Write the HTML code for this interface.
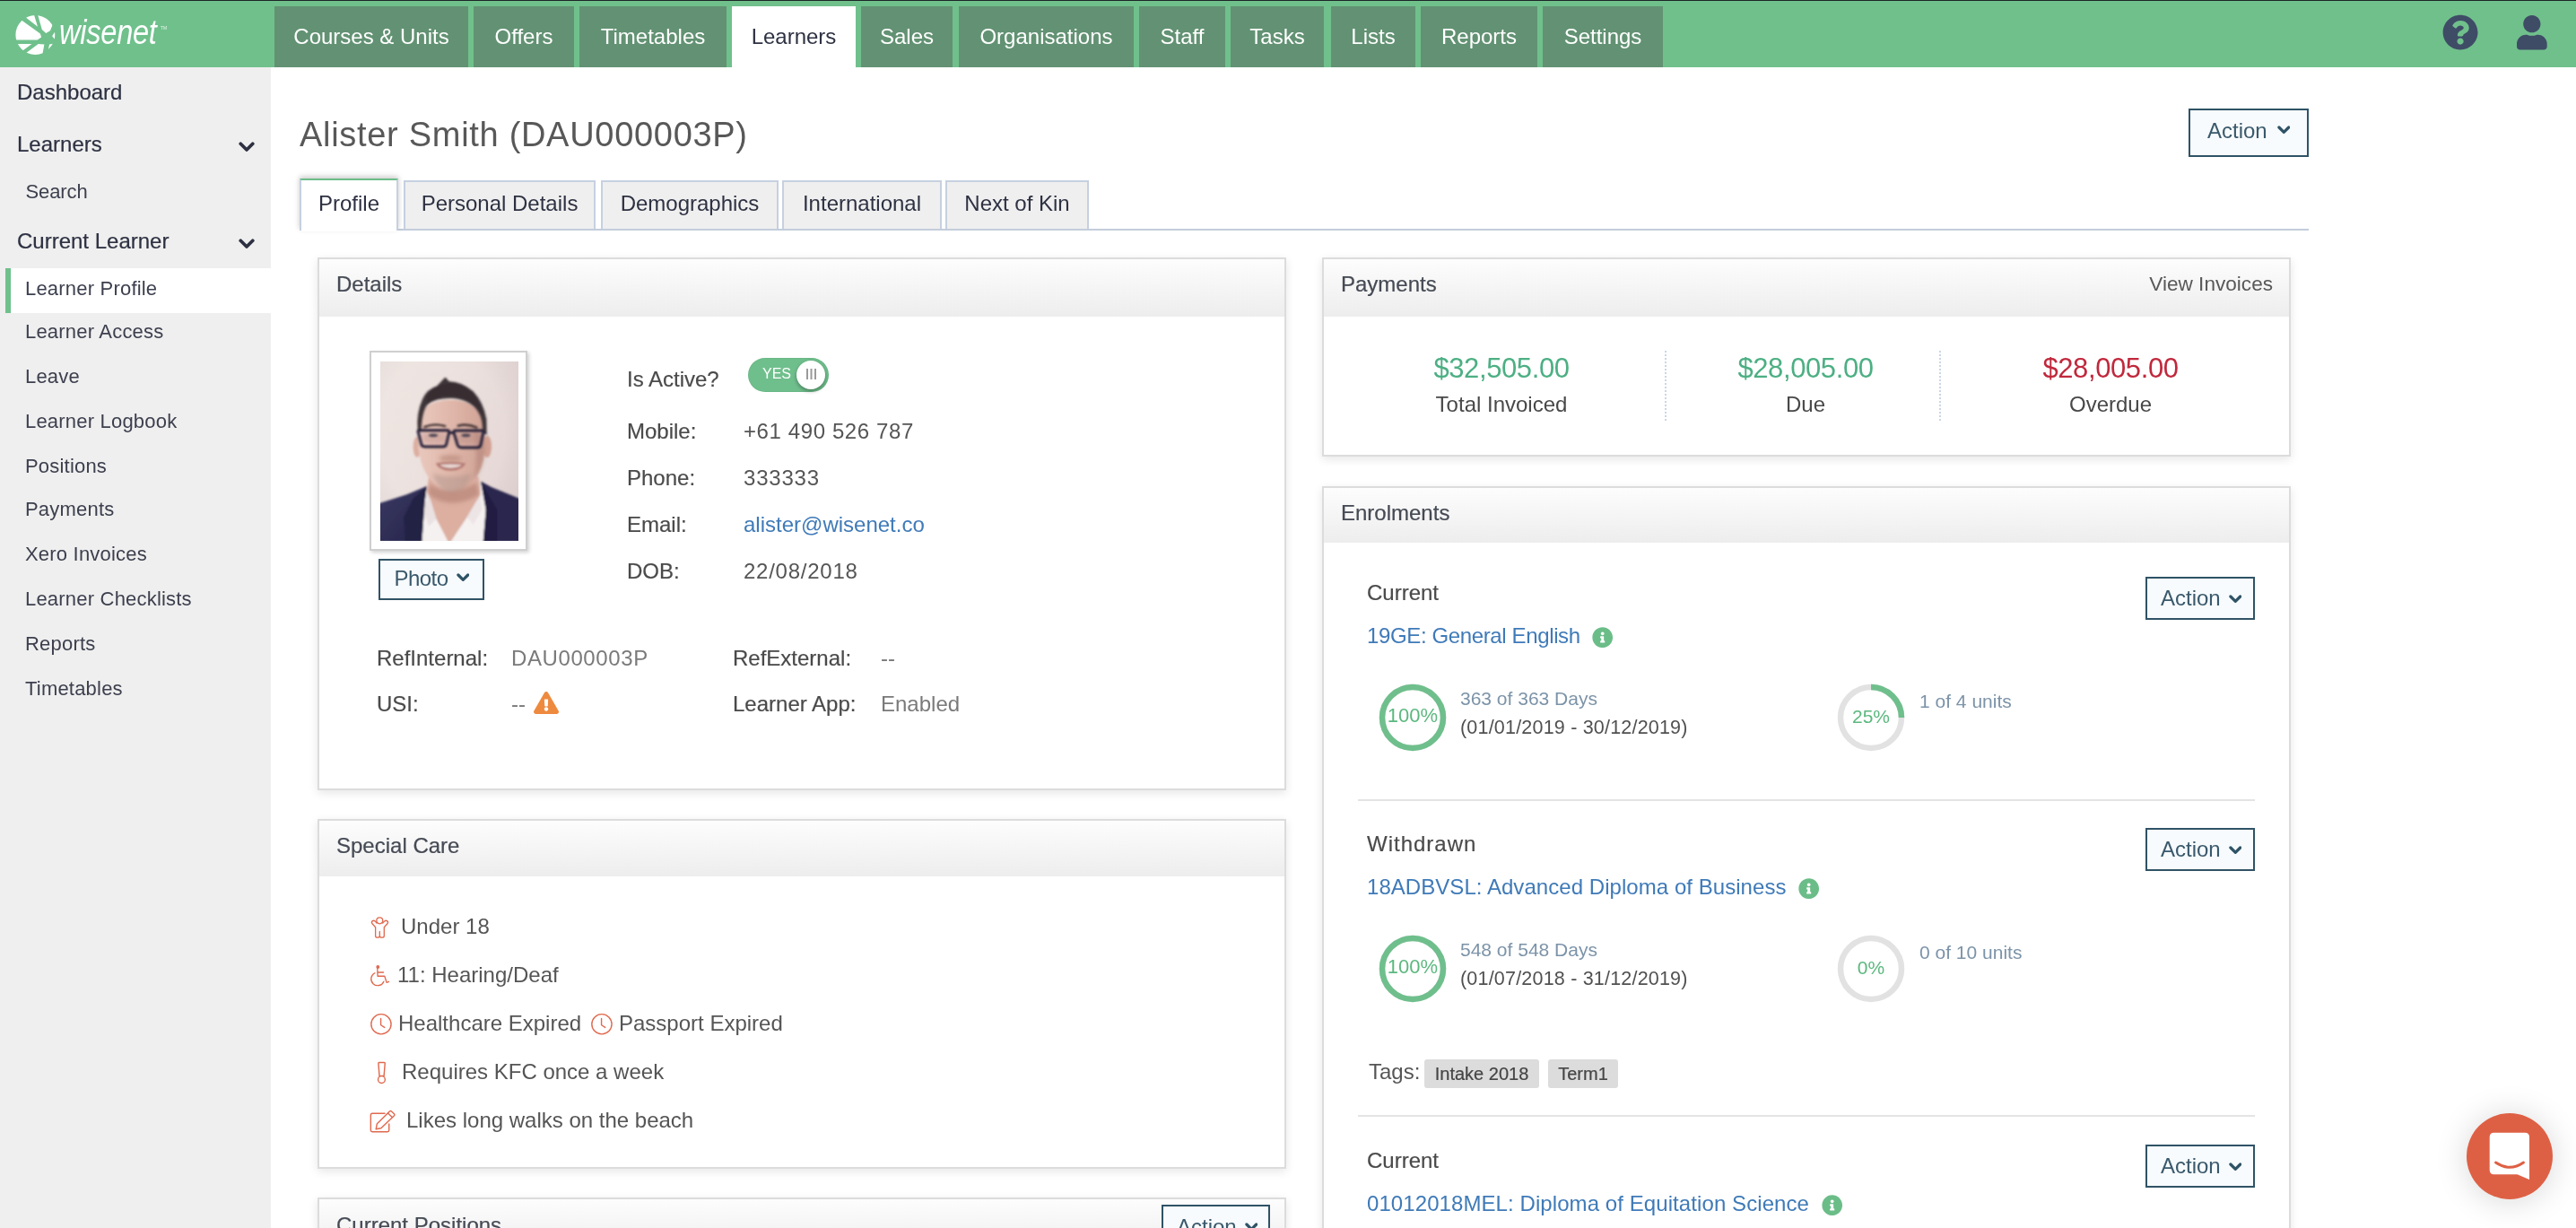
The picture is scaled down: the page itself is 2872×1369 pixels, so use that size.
<!DOCTYPE html>
<html>
<head>
<meta charset="utf-8">
<title>Alister Smith (DAU000003P)</title>
<style>
html,body{margin:0;padding:0;}
html{width:2872px;height:1369px;overflow:hidden;}
body{width:2872px;height:1369px;overflow:hidden;background:#fff;position:relative;font-family:"Liberation Sans",sans-serif;color:#4a4a4a;}
*{box-sizing:border-box;}
.abs{position:absolute;}
.t{position:absolute;white-space:nowrap;line-height:1;}
/* header */
#hdr{position:absolute;left:0;top:0;width:2872px;height:75px;background:#70c08c;}
#hdrline{position:absolute;left:0;top:0;width:2872px;height:1px;background:#1d2427;}
.nt{position:absolute;top:7px;height:68px;background:#629273;color:#fff;font-size:24px;line-height:68px;text-align:center;white-space:nowrap;}
.nt.on{background:#fff;color:#2d3142;}
/* sidebar */
#side{position:absolute;left:0;top:75px;width:302px;height:1294px;background:#efefef;}
.s1{color:#2d3142;font-size:24px;-webkit-text-stroke:0.2px #2d3142;}
.s2{color:#3c3f4d;font-size:22px;letter-spacing:0.2px;}
/* page tabs */
.pt{position:absolute;top:201px;height:54px;background:#efefef;border:2px solid #c6d0e0;border-bottom:none;color:#2d3142;font-size:24px;line-height:48px;text-align:center;white-space:nowrap;}
/* panels */
.panel{position:absolute;background:#fff;border:2px solid #dcdcdc;box-shadow:0 3px 10px rgba(0,0,0,0.10);}
.ph{position:absolute;left:0;top:0;right:0;height:63px;background:linear-gradient(#fdfdfd,#ededed);}
.pht{position:absolute;left:19px;top:16px;font-size:24px;line-height:1;color:#454a54;-webkit-text-stroke:0.2px #454a54;white-space:nowrap;}
.lb{font-size:24px;color:#4a4a4a;-webkit-text-stroke:0.18px #4a4a4a;}
.vl{font-size:24px;color:#555;}
.gv{font-size:24px;color:#7a7a7a;}
.amt{font-size:31px;text-align:center;letter-spacing:-0.4px;}
.albl{font-size:24px;text-align:center;color:#484848;}
.tag{top:0;height:32px;background:#dcdcdc;border-radius:3px;font-size:20px;line-height:32px;-webkit-text-stroke:0.2px #454545;text-align:center;color:#454545;white-space:nowrap;}
.btn{position:absolute;border:2px solid #2f5366;background:#f7fbfd;color:#2f5366;font-size:24px;white-space:nowrap;}
</style>
</head>
<body>
<div id="wrap" style="position:absolute;left:0;top:0;width:2872px;height:1369px;overflow:hidden;will-change:transform;">
<!-- HEADER -->
<div id="hdr"></div>
<div id="hdrline"></div>
<!-- LOGO -->
<svg class="abs" style="left:0px;top:0px;" width="80" height="80" viewBox="0 0 936.7 936.7">
<defs><clipPath id="gcl"><circle cx="461" cy="456" r="257"/></clipPath></defs>
<g clip-path="url(#gcl)" fill="#fff">
<path d="M492 348 L300 200 L300 100 L430 100 L445 195 Z"/>
<path d="M548 385 L478 140 L800 140 L690 315 L655 400 L600 432 Z"/>
<path d="M525 440 L150 169 L150 522 L488 522 L540 485 Z"/>
<path d="M415 575 L150 575 L150 768 Z"/>
<path d="M500 575 L578 580 L540 790 L250 790 L250 758 Z"/>
<path d="M722 408 L681 470 L722 522 Z"/>
<path d="M645 580 L694 570 L632 644 Z"/>
</g>
</svg>
<span class="t" style="left:66px;top:16px;font-size:39px;font-style:italic;color:#fff;transform:scaleX(0.835);transform-origin:0 0;letter-spacing:-0.3px;">wisenet</span>
<span class="t" style="left:179px;top:29px;font-size:5px;color:#e8f5ec;">TM</span>

<!-- nav tabs -->
<div class="nt" style="left:306px;width:216px;">Courses &amp; Units</div>
<div class="nt" style="left:528px;width:112px;">Offers</div>
<div class="nt" style="left:646px;width:164px;">Timetables</div>
<div class="nt on" style="left:816px;width:138px;">Learners</div>
<div class="nt" style="left:960px;width:102px;">Sales</div>
<div class="nt" style="left:1069px;width:195px;">Organisations</div>
<div class="nt" style="left:1270px;width:96px;">Staff</div>
<div class="nt" style="left:1372px;width:104px;">Tasks</div>
<div class="nt" style="left:1484px;width:94px;">Lists</div>
<div class="nt" style="left:1584px;width:130px;">Reports</div>
<div class="nt" style="left:1720px;width:134px;">Settings</div>
<!-- HEADER ICONS -->
<svg class="abs" style="left:2723.3px;top:15.7px;" width="40.15" height="40.15" viewBox="0 0 512 512"><path fill="#3f4c66" d="M504 256c0 136.997-111.043 248-248 248S8 392.997 8 256C8 119.083 119.043 8 256 8s248 111.083 248 248zM262.655 90c-54.497 0-89.255 22.957-116.549 63.758-3.536 5.286-2.353 12.415 2.715 16.258l34.699 26.31c5.205 3.947 12.621 3.008 16.665-2.122 17.864-22.658 30.113-35.797 57.303-35.797 20.429 0 45.698 13.148 45.698 32.958 0 14.976-12.363 22.667-32.534 33.976C247.128 238.528 216 254.941 216 296v4c0 6.627 5.373 12 12 12h56c6.627 0 12-5.373 12-12v-1.333c0-28.462 83.186-29.647 83.186-106.667 0-58.002-60.165-102-116.531-102zM256 338c-25.365 0-46 20.635-46 46 0 25.364 20.635 46 46 46s46-20.636 46-46c0-25.365-20.635-46-46-46z"/></svg>
<svg class="abs" style="left:2806.2px;top:17.2px;" width="33.7" height="38.5" viewBox="0 0 448 512"><path fill="#3f4c66" d="M224 256c70.7 0 128-57.3 128-128S294.7 0 224 0 96 57.3 96 128s57.3 128 128 128zm89.6 32h-16.7c-22.2 10.2-46.9 16-72.9 16s-50.600-5.800-72.900-16h-16.700C60.200 288 0 348.200 0 422.400V464c0 26.500 21.500 48 48 48h352c26.500 0 48-21.500 48-48v-41.600c0-74.200-60.200-134.400-134.400-134.400z"/></svg>


<!-- SIDEBAR -->
<div id="side"></div>
<div class="abs" style="left:6px;top:299px;width:6px;height:50px;background:#70c08c;"></div>
<div class="abs" style="left:12px;top:299px;width:290px;height:50px;background:#fff;"></div>
<span class="t s1" style="left:19px;top:91px;">Dashboard</span>
<span class="t s1" style="left:19px;top:149px;">Learners</span>
<span class="t s2" style="left:28.5px;top:203px;letter-spacing:-0.1px;">Search</span>
<span class="t s1" style="left:19px;top:257px;">Current Learner</span>
<span class="t s2" style="left:28px;top:311px;">Learner Profile</span>
<span class="t s2" style="left:28px;top:359px;">Learner Access</span>
<span class="t s2" style="left:28px;top:409px;">Leave</span>
<span class="t s2" style="left:28px;top:459px;">Learner Logbook</span>
<span class="t s2" style="left:28px;top:509px;">Positions</span>
<span class="t s2" style="left:28px;top:557px;">Payments</span>
<span class="t s2" style="left:28px;top:607px;">Xero Invoices</span>
<span class="t s2" style="left:28px;top:657px;">Learner Checklists</span>
<span class="t s2" style="left:28px;top:707px;">Reports</span>
<span class="t s2" style="left:28px;top:757px;">Timetables</span>
<svg class="abs" style="left:266px;top:158.2px;" width="18" height="12.6" viewBox="0 0 20 14"><path d="M2.5 2.5 L10 10 L17.5 2.5" fill="none" stroke="#2d3142" stroke-width="4.2" stroke-linecap="round" stroke-linejoin="round"/></svg>
<svg class="abs" style="left:266px;top:266.2px;" width="18" height="12.6" viewBox="0 0 20 14"><path d="M2.5 2.5 L10 10 L17.5 2.5" fill="none" stroke="#2d3142" stroke-width="4.2" stroke-linecap="round" stroke-linejoin="round"/></svg>

<!-- TITLE -->
<span class="t" style="left:334px;top:131px;font-size:38px;color:#585858;letter-spacing:0.7px;">Alister Smith (DAU000003P)</span>
<div class="btn" style="left:2440px;top:121px;width:134px;height:54px;"></div>
<span class="t" style="left:2461px;top:134px;font-size:24px;color:#3a596c;">Action</span>
<svg class="abs" style="left:2538.7px;top:139.8px;" width="14.6" height="9.6" viewBox="0 0 14.6 9.6"><path d="M1.9 2 L7.3 7.4 L12.7 2" fill="none" stroke="#2f5366" stroke-width="3.2" stroke-linecap="round" stroke-linejoin="round"/></svg>

<!-- PAGE TABS -->
<div class="abs" style="left:334px;top:255px;width:2240px;height:2px;background:#c3cddb;"></div>
<div class="pt" style="left:450px;width:214px;">Personal Details</div>
<div class="pt" style="left:670px;width:198px;">Demographics</div>
<div class="pt" style="left:872px;width:178px;">International</div>
<div class="pt" style="left:1054px;width:160px;">Next of Kin</div>
<div class="abs" style="left:334px;top:199px;width:110px;height:58px;background:#fff;border:2px solid #c6d0e0;border-top:2px solid #6bbd88;border-bottom:none;box-shadow:0 -2px 6px rgba(0,0,0,0.22);"></div>
<div class="abs" style="left:336px;top:250px;width:106px;height:8px;background:#fff;"></div>
<span class="t" style="left:355px;top:215px;font-size:24px;color:#2d3142;">Profile</span>

<!-- PANELS -->
<div class="panel" id="pDetails" style="left:354px;top:287px;width:1080px;height:594px;"><div class="ph" style="height:64px"></div><span class="pht">Details</span></div>
<div class="panel" id="pCare" style="left:354px;top:913px;width:1080px;height:390px;"><div class="ph" style="height:62px"></div><span class="pht">Special Care</span></div>
<div class="panel" id="pPos" style="left:354px;top:1335px;width:1080px;height:120px;"><div class="ph" style="height:62px"></div><span class="pht" style="top:17px">Current Positions</span></div>
<div class="panel" id="pPay" style="left:1474px;top:287px;width:1080px;height:222px;"><div class="ph" style="height:64px"></div><span class="pht">Payments</span></div>
<div class="panel" id="pEnr" style="left:1474px;top:541.5px;width:1080px;height:900px;"><div class="ph" style="height:61.5px"></div><span class="pht">Enrolments</span></div>

<!-- DETAILS CONTENT -->
<div class="abs" style="left:412px;top:391px;width:176px;height:223px;background:#fff;border:2px solid #cfcfcf;box-shadow:2px 2px 4px rgba(0,0,0,0.18);"></div>
<svg class="abs" style="left:424px;top:403px;" width="154" height="200" viewBox="24 18 916 1189" preserveAspectRatio="none">
<defs>
<linearGradient id="pbg" x1="0" y1="0" x2="1" y2="0.5"><stop offset="0" stop-color="#efe7e3"/><stop offset="0.55" stop-color="#ebe0dd"/><stop offset="1" stop-color="#e5d7d6"/></linearGradient>
<radialGradient id="pvg" cx="0.45" cy="0.4" r="0.75"><stop offset="0.6" stop-color="#000" stop-opacity="0"/><stop offset="1" stop-color="#5a4050" stop-opacity="0.07"/></radialGradient>
<linearGradient id="pface" x1="0" y1="0" x2="1" y2="0"><stop offset="0" stop-color="#e9c8bd"/><stop offset="0.5" stop-color="#e0b7aa"/><stop offset="1" stop-color="#cfa295"/></linearGradient>
<linearGradient id="pjk" x1="0" y1="0" x2="1" y2="1"><stop offset="0" stop-color="#3a3963"/><stop offset="1" stop-color="#25244a"/></linearGradient>
<filter id="pbl" x="-5%" y="-5%" width="110%" height="110%"><feGaussianBlur stdDeviation="7"/></filter>
<filter id="pbl3" x="-20%" y="-20%" width="140%" height="140%"><feGaussianBlur stdDeviation="14"/></filter>
<clipPath id="pcl"><rect x="24" y="18" width="916" height="1189"/></clipPath>
</defs>
<rect x="24" y="18" width="916" height="1189" fill="url(#pbg)"/>
<rect x="24" y="18" width="916" height="1189" fill="url(#pvg)"/>
<g clip-path="url(#pcl)">
<g filter="url(#pbl)">
<!-- neck -->
<path d="M345 780 L675 780 L690 900 L600 1050 L490 1215 L470 1215 L390 1060 L335 900 Z" fill="#dcafa1"/>
<!-- shirt -->
<path d="M318 862 L345 900 L395 1060 L475 1215 L295 1215 L300 1000 Z" fill="#f6f1f1"/>
<path d="M688 815 L722 900 L725 1010 L708 1215 L490 1215 L600 1050 L685 905 Z" fill="#f6f1f1"/>
<path d="M345 900 L395 1060 L345 1110 L312 1000 Z" fill="#e9e1e2"/>
<path d="M600 1050 L685 905 L700 1000 L640 1100 Z" fill="#ece4e5"/>
<!-- jacket -->
<path d="M10 960 L200 900 L332 845 L318 960 L300 1215 L10 1215 Z" fill="url(#pjk)"/>
<path d="M690 812 L760 850 L950 928 L950 1215 L706 1215 L724 1000 Z" fill="#29284e"/>
<path d="M332 845 L318 960 L300 1215 L190 1215 L180 1050 L240 930 Z" fill="#222145"/>
<path d="M690 812 L724 1000 L706 1215 L800 1215 L800 1000 Z" fill="#211f42"/>
<!-- ears -->
<ellipse cx="268" cy="585" rx="26" ry="68" fill="#dcaea0"/>
<ellipse cx="732" cy="582" rx="30" ry="72" fill="#d3a193"/>
<!-- face -->
<path d="M275 420 Q290 280 490 270 Q700 280 716 430 L718 590 Q710 720 650 800 Q580 885 500 888 Q420 885 355 800 Q290 720 276 590 Z" fill="url(#pface)"/>
</g>
<!-- soft shadows -->
<g filter="url(#pbl3)">
<path d="M350 830 Q500 930 660 820 L680 900 Q500 1010 340 900 Z" fill="#b98779" opacity="0.75"/>
<path d="M370 760 Q500 800 630 760 Q600 880 500 888 Q410 880 370 760 Z" fill="#a88c84" opacity="0.42"/>
<path d="M640 470 Q720 480 715 620 Q700 740 640 800 Q680 650 640 470 Z" fill="#b4857a" opacity="0.6"/>
<ellipse cx="490" cy="660" rx="75" ry="22" fill="#b98a7c" opacity="0.7"/>
<ellipse cx="380" cy="524" rx="80" ry="36" fill="#c9a096" opacity="0.5"/>
<ellipse cx="605" cy="526" rx="80" ry="36" fill="#c09488" opacity="0.5"/>
</g>
<g filter="url(#pbl)">
<!-- hair -->
<path d="M272 470 Q262 360 305 265 Q335 200 400 180 L455 122 L480 150 Q560 150 640 215 Q710 290 728 400 L730 505 L702 480 Q705 400 672 350 Q620 270 500 262 Q400 258 340 300 Q300 345 296 470 Z" fill="#3e3439"/>
<path d="M330 245 Q400 172 480 160 Q580 165 650 240 Q690 300 702 380 Q640 262 500 246 Q400 242 335 305 Z" fill="#372d33"/>
<!-- brows -->
<path d="M318 452 Q380 425 452 446" stroke="#4b3b3a" stroke-width="16" fill="none" stroke-linecap="round"/>
<path d="M540 444 Q600 428 662 455" stroke="#4b3b3a" stroke-width="16" fill="none" stroke-linecap="round"/>
<!-- eyes -->
<ellipse cx="375" cy="507" rx="30" ry="11" fill="#4f4654"/>
<ellipse cx="592" cy="507" rx="30" ry="11" fill="#4f4654"/>
<!-- glasses -->
<path d="M280 474 L470 474 Q482 474 480 488 L462 566 Q458 582 440 582 L318 582 Q300 582 296 566 L276 488 Q272 474 280 474 Z" fill="rgba(120,110,140,0.04)" stroke="#27233a" stroke-width="18"/>
<path d="M522 476 L698 476 Q708 476 706 490 L690 570 Q686 588 668 588 L560 588 Q542 588 536 570 L512 490 Q508 476 522 476 Z" fill="rgba(120,110,140,0.04)" stroke="#27233a" stroke-width="18"/>
<path d="M478 494 Q496 484 512 494" stroke="#27233a" stroke-width="16" fill="none"/>
<path d="M704 488 L726 494" stroke="#2b2740" stroke-width="12"/>
<!-- mouth -->
<path d="M392 692 Q490 676 590 692 Q572 738 490 742 Q412 738 392 692 Z" fill="#b67a73"/>
<path d="M420 702 Q490 695 562 702 Q548 722 490 724 Q436 722 420 702 Z" fill="#e8d9d5"/>
</g>
</g>
</svg>
<div class="btn" style="left:422px;top:623px;width:118px;height:46px;"></div>
<span class="t" style="left:439.5px;top:633px;font-size:24px;color:#3a596c;letter-spacing:-0.55px;">Photo</span>
<svg class="abs" style="left:508.7px;top:638.8px;" width="14.6" height="9.6" viewBox="0 0 14.6 9.6"><path d="M1.9 2 L7.3 7.4 L12.7 2" fill="none" stroke="#2f5366" stroke-width="3.2" stroke-linecap="round" stroke-linejoin="round"/></svg>

<span class="t lb" style="left:699px;top:411px;">Is Active?</span>
<span class="t lb" style="left:699px;top:469px;">Mobile:</span>
<span class="t lb" style="left:699px;top:521px;">Phone:</span>
<span class="t lb" style="left:699px;top:573px;">Email:</span>
<span class="t lb" style="left:699px;top:625px;">DOB:</span>
<span class="t vl" style="left:829px;top:469px;letter-spacing:0.6px;">+61 490 526 787</span>
<span class="t vl" style="left:829px;top:521px;letter-spacing:0.8px;">333333</span>
<span class="t vl" style="left:829px;top:573px;color:#3f7ab8;">alister@wisenet.co</span>
<span class="t vl" style="left:829px;top:625px;letter-spacing:0.75px;">22/08/2018</span>
<!-- toggle -->
<div class="abs" style="left:834px;top:399px;width:90px;height:38px;border-radius:19px;background:#6fbf8c;box-shadow:inset 0 0 0 1px rgba(0,0,0,0.04);"></div>
<span class="t" style="left:850px;top:409px;font-size:16px;color:#fff;">YES</span>
<div class="abs" style="left:888px;top:402px;width:32px;height:32px;border-radius:50%;background:#fff;box-shadow:0 2px 4px rgba(0,0,0,0.35);"></div>
<div class="abs" style="left:899px;top:411px;width:1.5px;height:12px;background:#9a9a9a;box-shadow:4.5px 0 0 #9a9a9a,9px 0 0 #9a9a9a;"></div>

<span class="t lb" style="left:420px;top:722px;">RefInternal:</span>
<span class="t gv" style="left:570px;top:722px;letter-spacing:0.6px;">DAU000003P</span>
<span class="t lb" style="left:817px;top:722px;">RefExternal:</span>
<span class="t gv" style="left:982px;top:722px;">--</span>
<span class="t lb" style="left:420px;top:773px;">USI:</span>
<span class="t gv" style="left:570px;top:773px;">--</span>
<svg class="abs" style="left:595px;top:771px;" width="28" height="25" viewBox="0 0 576 512"><path fill="#ee8a3e" d="M569.517 440.013C587.975 472.007 564.806 512 527.94 512H48.054c-36.937 0-59.999-40.055-41.577-71.987L246.423 23.985c18.467-32.009 64.72-31.951 83.154 0l239.94 416.028zM288 354c-25.405 0-46 20.595-46 46s20.595 46 46 46 46-20.595 46-46-20.595-46-46-46zm-43.673-165.346l7.418 136c.347 6.364 5.609 11.346 11.982 11.346h48.546c6.373 0 11.635-4.982 11.982-11.346l7.418-136c.375-6.874-5.098-12.654-11.982-12.654h-63.383c-6.884 0-12.356 5.78-11.981 12.654z"/></svg>
<span class="t lb" style="left:817px;top:773px;">Learner App:</span>
<span class="t gv" style="left:982px;top:773px;">Enabled</span>

<!-- SPECIAL CARE CONTENT -->
<svg class="abs" style="left:405px;top:1015px;" width="40" height="90" viewBox="0 0 546 1228" fill="none" stroke="#e0694e" stroke-width="18" stroke-linecap="round" stroke-linejoin="round">
<circle cx="250" cy="155" r="47"/>
<path d="M205 190 L180 162 Q162 146 142 158 Q120 174 134 198 L186 255 L186 385 Q186 412 217 412 Q250 412 250 385 L250 320 M250 385 Q250 412 284 412 Q318 412 318 385 L318 255 L370 198 Q384 174 362 158 Q342 146 324 162 L296 190"/>
<circle cx="222" cy="860" r="26" fill="#e0694e" stroke="none"/>
<path d="M216 880 L219 1000 L325 1000 L356 1096 L390 1083"/>
<path d="M218 942 L308 942"/>
<path d="M176 952 A100 100 0 1 0 312 1080"/>
</svg>
<svg class="abs" style="left:405px;top:1120px;" width="40" height="150" viewBox="0 0 327 1228" fill="none" stroke="#e0694e" stroke-width="11.5" stroke-linecap="round" stroke-linejoin="round">
<circle cx="163" cy="178" r="91"/>
<path d="M160 127 L160 186 L194 208"/>
<path d="M146 528 L190 528 Q199 528 198 537 L189 650 L147 650 L138 537 Q137 528 146 528 Z"/>
<circle cx="167" cy="684" r="32"/>
<path d="M196 993 L82 993 Q68 993 68 1007 L68 1146 Q68 1160 82 1160 L221 1160 Q235 1160 235 1146 L235 1088"/>
<path d="M126 1086 L240 974 Q249 966 258 974 L282 996 Q290 1004 282 1013 L162 1128 L116 1136 Z"/>
<path d="M224 990 L264 1028"/>
</svg>
<svg class="abs" style="left:650.9px;top:1120px;" width="40" height="150" viewBox="0 0 327 1228" fill="none" stroke="#e0694e" stroke-width="11.5" stroke-linecap="round" stroke-linejoin="round">
<circle cx="163" cy="178" r="91"/>
<path d="M160 127 L160 186 L194 208"/>
</svg>
<span class="t vl" style="left:447px;top:1021px;">Under 18</span>
<span class="t vl" style="left:443px;top:1075px;">11: Hearing/Deaf</span>
<span class="t vl" style="left:444px;top:1129px;">Healthcare Expired</span>
<span class="t vl" style="left:690px;top:1129px;">Passport Expired</span>
<span class="t vl" style="left:448px;top:1183px;">Requires KFC once a week</span>
<span class="t vl" style="left:453px;top:1237px;">Likes long walks on the beach</span>
<!-- current positions button -->
<div class="btn" style="left:1295px;top:1343px;width:121px;height:48px;"></div>
<span class="t" style="left:1312px;top:1356px;font-size:24px;color:#3a596c;">Action</span>
<svg class="abs" style="left:1387.7px;top:1362.8px;" width="14.6" height="9.6" viewBox="0 0 14.6 9.6"><path d="M1.9 2 L7.3 7.4 L12.7 2" fill="none" stroke="#2f5366" stroke-width="3.2" stroke-linecap="round" stroke-linejoin="round"/></svg>

<!-- PAYMENTS CONTENT -->
<span class="t" style="right:338px;top:306px;font-size:22.6px;color:#585858;">View Invoices</span>
<span class="t amt" style="left:1474px;width:400px;top:395px;color:#4caf83;">$32,505.00</span>
<span class="t amt" style="left:1813px;width:400px;top:395px;color:#4caf83;">$28,005.00</span>
<span class="t amt" style="left:2153px;width:400px;top:395px;color:#c0283c;">$28,005.00</span>
<span class="t albl" style="left:1474px;width:400px;top:439px;">Total Invoiced</span>
<span class="t albl" style="left:1813px;width:400px;top:439px;">Due</span>
<span class="t albl" style="left:2153px;width:400px;top:439px;">Overdue</span>
<div class="abs" style="left:1856px;top:391px;width:0;height:78px;border-left:2px dotted #c9d6e6;"></div>
<div class="abs" style="left:2162px;top:391px;width:0;height:78px;border-left:2px dotted #c9d6e6;"></div>

<!-- ENROLMENTS CONTENT -->
<span class="t lb" style="left:1524px;top:649px;">Current</span>
<div class="btn" style="left:2392px;top:643px;width:122px;height:48px;"></div>
<span class="t" style="left:2409px;top:655px;font-size:24px;color:#3a596c;">Action</span>
<svg class="abs" style="left:2484.7px;top:662.8px;" width="14.6" height="9.6" viewBox="0 0 14.6 9.6"><path d="M1.9 2 L7.3 7.4 L12.7 2" fill="none" stroke="#2f5366" stroke-width="3.2" stroke-linecap="round" stroke-linejoin="round"/></svg>
<span class="t" style="left:1524px;top:697px;font-size:24px;color:#3f7ab8;letter-spacing:-0.37px;">19GE: General English</span>
<svg class="abs" style="left:1774.8px;top:698.8px;" width="23.4" height="23.4" viewBox="0 0 512 512"><path fill="#6bbd88" d="M256 8C119.043 8 8 119.083 8 256c0 136.997 111.043 248 248 248s248-111.003 248-248C504 119.083 392.957 8 256 8zm0 110c23.196 0 42 18.804 42 42s-18.804 42-42 42-42-18.804-42-42 18.804-42 42-42zm56 254c0 6.627-5.373 12-12 12h-88c-6.627 0-12-5.373-12-12v-24c0-6.627 5.373-12 12-12h12v-64h-12c-6.627 0-12-5.373-12-12v-24c0-6.627 5.373-12 12-12h64c6.627 0 12 5.373 12 12v100h12c6.627 0 12 5.373 12 12v24z"/></svg>
<svg class="abs" style="left:1537px;top:762px;" width="76" height="76" viewBox="0 0 76 76"><circle cx="38" cy="38" r="34" fill="none" stroke="#e2e2e2" stroke-width="6.5"/><circle cx="38" cy="38" r="34" fill="none" stroke="#6fbf8c" stroke-width="6.5" stroke-dasharray="213.63 213.63" transform="rotate(-90 38 38)"/></svg><span class="t" style="left:1537px;width:76px;text-align:center;top:787px;font-size:22px;color:#5cb87f;">100%</span>
<span class="t" style="left:1628px;top:768px;font-size:21px;color:#7c93a8;">363 of 363 Days</span>
<span class="t" style="left:1628px;top:799px;font-size:21.5px;color:#505050;letter-spacing:0.2px;margin-top:1.5px;">(01/01/2019 - 30/12/2019)</span>
<svg class="abs" style="left:2048px;top:762px;" width="76" height="76" viewBox="0 0 76 76"><circle cx="38" cy="38" r="34" fill="none" stroke="#e2e2e2" stroke-width="6.5"/><circle cx="38" cy="38" r="34" fill="none" stroke="#6fbf8c" stroke-width="6.5" stroke-dasharray="53.41 213.63" transform="rotate(-90 38 38)"/></svg><span class="t" style="left:2048px;width:76px;text-align:center;top:788px;font-size:21px;color:#5cb87f;">25%</span>
<span class="t" style="left:2140px;top:771px;font-size:21px;color:#7c93a8;">1 of 4 units</span>
<div class="abs" style="left:1514px;top:891px;width:1000px;height:2px;background:#e4e4e4;"></div>
<span class="t lb" style="left:1524px;top:929px;letter-spacing:1px;">Withdrawn</span>
<div class="btn" style="left:2392px;top:923px;width:122px;height:48px;"></div>
<span class="t" style="left:2409px;top:935px;font-size:24px;color:#3a596c;">Action</span>
<svg class="abs" style="left:2484.7px;top:942.8px;" width="14.6" height="9.6" viewBox="0 0 14.6 9.6"><path d="M1.9 2 L7.3 7.4 L12.7 2" fill="none" stroke="#2f5366" stroke-width="3.2" stroke-linecap="round" stroke-linejoin="round"/></svg>
<span class="t" style="left:1524px;top:977px;font-size:24px;color:#3f7ab8;letter-spacing:0.05px;">18ADBVSL: Advanced Diploma of Business</span>
<svg class="abs" style="left:2004.8px;top:978.8px;" width="23.4" height="23.4" viewBox="0 0 512 512"><path fill="#6bbd88" d="M256 8C119.043 8 8 119.083 8 256c0 136.997 111.043 248 248 248s248-111.003 248-248C504 119.083 392.957 8 256 8zm0 110c23.196 0 42 18.804 42 42s-18.804 42-42 42-42-18.804-42-42 18.804-42 42-42zm56 254c0 6.627-5.373 12-12 12h-88c-6.627 0-12-5.373-12-12v-24c0-6.627 5.373-12 12-12h12v-64h-12c-6.627 0-12-5.373-12-12v-24c0-6.627 5.373-12 12-12h64c6.627 0 12 5.373 12 12v100h12c6.627 0 12 5.373 12 12v24z"/></svg>
<svg class="abs" style="left:1537px;top:1042px;" width="76" height="76" viewBox="0 0 76 76"><circle cx="38" cy="38" r="34" fill="none" stroke="#e2e2e2" stroke-width="6.5"/><circle cx="38" cy="38" r="34" fill="none" stroke="#6fbf8c" stroke-width="6.5" stroke-dasharray="213.63 213.63" transform="rotate(-90 38 38)"/></svg><span class="t" style="left:1537px;width:76px;text-align:center;top:1067px;font-size:22px;color:#5cb87f;">100%</span>
<span class="t" style="left:1628px;top:1048px;font-size:21px;color:#7c93a8;">548 of 548 Days</span>
<span class="t" style="left:1628px;top:1079px;font-size:21.5px;color:#505050;letter-spacing:0.2px;margin-top:1.5px;">(01/07/2018 - 31/12/2019)</span>
<svg class="abs" style="left:2048px;top:1042px;" width="76" height="76" viewBox="0 0 76 76"><circle cx="38" cy="38" r="34" fill="none" stroke="#e2e2e2" stroke-width="6.5"/></svg><span class="t" style="left:2048px;width:76px;text-align:center;top:1068px;font-size:21px;color:#5cb87f;">0%</span>
<span class="t" style="left:2140px;top:1051px;font-size:21px;color:#7c93a8;">0 of 10 units</span>
<span class="t vl" style="left:1526px;top:1183px;">Tags:</span>
<div class="abs tag" style="left:1588px;top:1181px;width:128px;">Intake 2018</div>
<div class="abs tag" style="left:1726px;top:1181px;width:78px;">Term1</div>
<div class="abs" style="left:1514px;top:1243px;width:1000px;height:2px;background:#e4e4e4;"></div>
<span class="t lb" style="left:1524px;top:1282px;">Current</span>
<div class="btn" style="left:2392px;top:1276px;width:122px;height:48px;"></div>
<span class="t" style="left:2409px;top:1288px;font-size:24px;color:#3a596c;">Action</span>
<svg class="abs" style="left:2484.7px;top:1295.8px;" width="14.6" height="9.6" viewBox="0 0 14.6 9.6"><path d="M1.9 2 L7.3 7.4 L12.7 2" fill="none" stroke="#2f5366" stroke-width="3.2" stroke-linecap="round" stroke-linejoin="round"/></svg>
<span class="t" style="left:1524px;top:1330px;font-size:24px;color:#3f7ab8;letter-spacing:0.08px;">01012018MEL: Diploma of Equitation Science</span>
<svg class="abs" style="left:2030.8px;top:1331.8px;" width="23.4" height="23.4" viewBox="0 0 512 512"><path fill="#6bbd88" d="M256 8C119.043 8 8 119.083 8 256c0 136.997 111.043 248 248 248s248-111.003 248-248C504 119.083 392.957 8 256 8zm0 110c23.196 0 42 18.804 42 42s-18.804 42-42 42-42-18.804-42-42 18.804-42 42-42zm56 254c0 6.627-5.373 12-12 12h-88c-6.627 0-12-5.373-12-12v-24c0-6.627 5.373-12 12-12h12v-64h-12c-6.627 0-12-5.373-12-12v-24c0-6.627 5.373-12 12-12h64c6.627 0 12 5.373 12 12v100h12c6.627 0 12 5.373 12 12v24z"/></svg>

<!-- CHAT -->
<div class="abs" style="left:2750px;top:1241px;width:96px;height:96px;border-radius:50%;background:#de6044;box-shadow:0 2px 36px rgba(0,0,0,0.16);"></div>
<svg class="abs" style="left:2770px;top:1258px;" width="56" height="62" viewBox="0 0 56 62"><path d="M10.5 4.7 L45 4.7 Q50 4.7 50 9.7 L50 57 L36.5 51.3 L10.5 51.3 Q5.7 51.3 5.7 46.3 L5.7 9.7 Q5.7 4.7 10.5 4.7 Z" fill="#fff"/><path d="M12.5 38 Q28 48.5 43.5 38" fill="none" stroke="#de6044" stroke-width="2.9" stroke-linecap="round"/></svg>

</div>
</body>
</html>
